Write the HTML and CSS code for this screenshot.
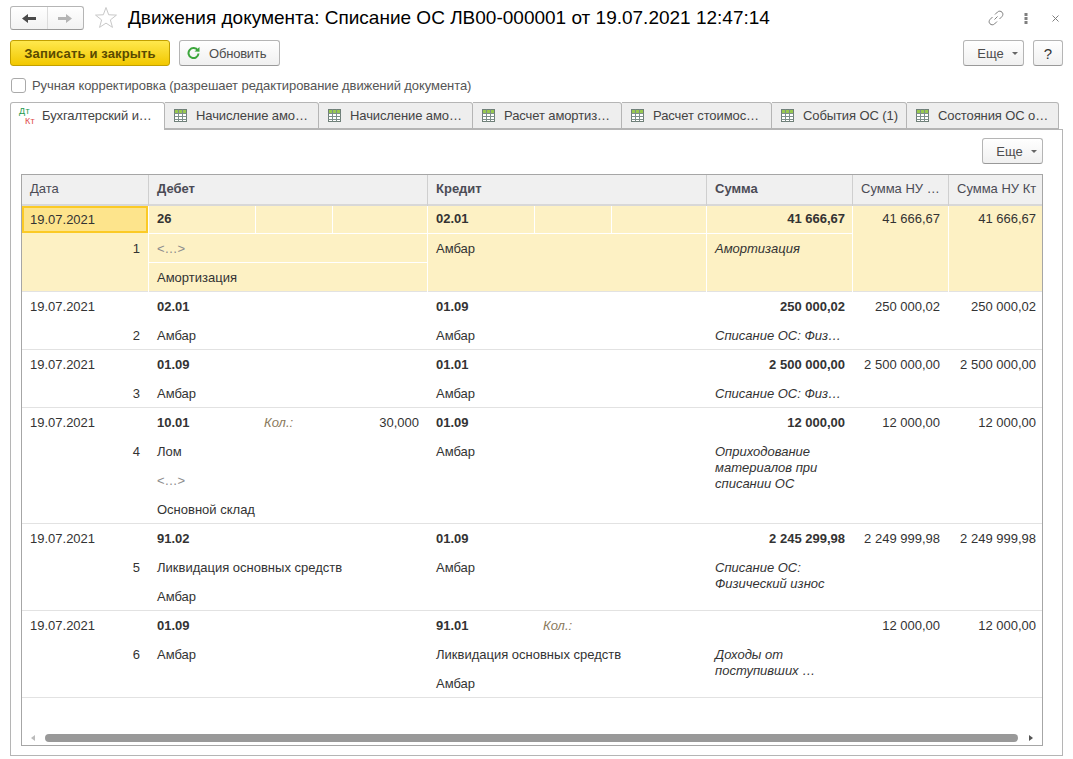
FILE: index.html
```html
<!DOCTYPE html>
<html lang="ru">
<head>
<meta charset="UTF-8">
<title>Движения документа</title>
<link rel="stylesheet" href="styles.css">
</head>
<body>
<svg width="0" height="0" class="defs">
  <symbol id="grid" viewBox="0 0 13 13">
    <rect x="0.5" y="0.5" width="12" height="12" fill="#fff" stroke="#6f7f78"/>
    <rect x="1" y="1" width="11" height="3" fill="#97c84f"/>
    <path d="M0.5 4.500H12.500M0.500 7.500H12.500M0.500 10.500H12.500M4.500 0.500V12.500M8.500 0.500V12.500" stroke="#7d8f8a" fill="none"/>
  </symbol>
</svg>

<div class="title-bar">
  <div class="nav-group">
    <button class="nav-btn nav-back">
      <svg width="14" height="9" viewBox="0 0 14 9"><path d="M0 4.500L6 0V3H14V6H6V9Z" fill="#4a4a4a"/></svg>
    </button>
    <button class="nav-btn">
      <svg width="14" height="9" viewBox="0 0 14 9"><path d="M14 4.500L8 0V3H0V6H8V9Z" fill="#b4b4b4"/></svg>
    </button>
  </div>
  <svg class="star" width="24" height="24" viewBox="0 0 24 24"><path d="M12 1.500L14.700 8.780L22.460 9.100L16.370 13.920L18.470 21.400L12 17.100L5.530 21.400L7.630 13.920L1.540 9.100L9.300 8.780Z" fill="#fff" stroke="#c8c8c8"/></svg>
  <h1 class="title">Движения документа: Списание ОС ЛВ00-000001 от 19.07.2021 12:47:14</h1>
  <div class="win-icons">
    <svg width="16" height="16" viewBox="0 0 16 16"><path d="M6.500 9.500L9.500 6.500M7 4.500L9.500 2C11 .7 12.800 1 14 2.200S15.200 5 14 6.500L11.500 9M9 11.500L6.500 14C5 15.200 3.200 15 2 13.800S.8 11 2 9.500L4.500 7" fill="none" stroke="#808080"/></svg>
    <svg class="dots" width="4" height="11" viewBox="0 0 4 11"><path d="M0.500 0H3.500V3H0.500ZM0.500 4H3.500V7H0.500ZM0.500 8H3.500V11H0.500Z" fill="#7f7f7f"/></svg>
    <svg width="7" height="7" viewBox="0 0 7 7"><path d="M0.500 0.500L6.500 6.500M6.500 0.500L0.500 6.500" stroke="#7f7f7f" fill="none"/></svg>
  </div>
</div>

<div class="command-bar">
  <button class="btn btn-primary">Записать и закрыть</button>
  <button class="btn btn-refresh">
    <svg width="13" height="13" viewBox="0 0 13 13"><path d="M10.800 3.500A5 5 0 1 0 11.500 6.500" fill="none" stroke="#3ca63c" stroke-width="2"/><path d="M7.500 4.500L12.500 4.800V0Z" fill="#3ca63c"/></svg>
    Обновить
  </button>
  <div class="spacer"></div>
  <button class="btn btn-more">Еще<span class="caret"></span></button>
  <button class="btn btn-help">?</button>
</div>

<label class="check-line"><span class="checkbox"></span>Ручная корректировка (разрешает редактирование движений документа)</label>

<div class="tabs">
  <div class="tab tab-active w1"><span class="dt-kt"><span class="dt">Дт</span><span class="kt">Кт</span></span><span class="tab-text">Бухгалтерский и…</span></div>
  <div class="tab w2"><svg class="tab-icon"><use href="#grid"/></svg><span class="tab-text">Начисление амо…</span></div>
  <div class="tab w3"><svg class="tab-icon"><use href="#grid"/></svg><span class="tab-text">Начисление амо…</span></div>
  <div class="tab w4"><svg class="tab-icon"><use href="#grid"/></svg><span class="tab-text">Расчет амортиз…</span></div>
  <div class="tab w5"><svg class="tab-icon"><use href="#grid"/></svg><span class="tab-text">Расчет стоимос…</span></div>
  <div class="tab w6"><svg class="tab-icon"><use href="#grid"/></svg><span class="tab-text">События ОС (1)</span></div>
  <div class="tab w7"><svg class="tab-icon"><use href="#grid"/></svg><span class="tab-text">Состояния ОС о…</span></div>
</div>

<div class="panel">
  <div class="panel-tools">
    <button class="btn btn-more">Еще<span class="caret"></span></button>
  </div>

  <div class="table">
    <div class="row head">
      <div class="hcell">Дата</div>
      <div class="hcell bold">Дебет</div>
      <div class="hcell bold">Кредит</div>
      <div class="hcell bold">Сумма</div>
      <div class="hcell">Сумма НУ …</div>
      <div class="hcell">Сумма НУ Кт</div>
    </div>

    <div class="rows">
      <div class="row selected">
        <div class="cell c-date">
          <div class="current">19.07.2021</div>
          <div class="line num">1</div>
        </div>
        <div class="cell">
          <div class="line sub sep"><b>26</b><i></i><i></i></div>
          <div class="line sep muted">&lt;…&gt;</div>
          <div class="line">Амортизация</div>
        </div>
        <div class="cell">
          <div class="line sub sep"><b>02.01</b><i></i><i></i></div>
          <div class="line">Амбар</div>
        </div>
        <div class="cell">
          <div class="line right sep"><b>41 666,67</b></div>
          <div class="note">Амортизация</div>
        </div>
        <div class="cell"><div class="line right">41 666,67</div></div>
        <div class="cell"><div class="line right">41 666,67</div></div>
      </div>

      <div class="row">
        <div class="cell c-date"><div class="line">19.07.2021</div><div class="line num">2</div></div>
        <div class="cell"><div class="line"><b>02.01</b></div><div class="line">Амбар</div></div>
        <div class="cell"><div class="line"><b>01.09</b></div><div class="line">Амбар</div></div>
        <div class="cell"><div class="line right"><b>250 000,02</b></div><div class="note">Списание ОС: Физ…</div></div>
        <div class="cell"><div class="line right">250 000,02</div></div>
        <div class="cell"><div class="line right">250 000,02</div></div>
      </div>

      <div class="row">
        <div class="cell c-date"><div class="line">19.07.2021</div><div class="line num">3</div></div>
        <div class="cell"><div class="line"><b>01.09</b></div><div class="line">Амбар</div></div>
        <div class="cell"><div class="line"><b>01.01</b></div><div class="line">Амбар</div></div>
        <div class="cell"><div class="line right"><b>2 500 000,00</b></div><div class="note">Списание ОС: Физ…</div></div>
        <div class="cell"><div class="line right">2 500 000,00</div></div>
        <div class="cell"><div class="line right">2 500 000,00</div></div>
      </div>

      <div class="row">
        <div class="cell c-date"><div class="line">19.07.2021</div><div class="line num">4</div></div>
        <div class="cell">
          <div class="line sub"><b>10.01</b><em>Кол.:</em><span>30,000</span></div>
          <div class="line">Лом</div>
          <div class="line muted">&lt;…&gt;</div>
          <div class="line">Основной склад</div>
        </div>
        <div class="cell"><div class="line"><b>01.09</b></div><div class="line">Амбар</div></div>
        <div class="cell"><div class="line right"><b>12 000,00</b></div><div class="note">Оприходование материалов при списании ОС</div></div>
        <div class="cell"><div class="line right">12 000,00</div></div>
        <div class="cell"><div class="line right">12 000,00</div></div>
      </div>

      <div class="row">
        <div class="cell c-date"><div class="line">19.07.2021</div><div class="line num">5</div></div>
        <div class="cell"><div class="line"><b>91.02</b></div><div class="line">Ликвидация основных средств</div><div class="line">Амбар</div></div>
        <div class="cell"><div class="line"><b>01.09</b></div><div class="line">Амбар</div></div>
        <div class="cell"><div class="line right"><b>2 245 299,98</b></div><div class="note">Списание ОС: Физический износ</div></div>
        <div class="cell"><div class="line right">2 249 999,98</div></div>
        <div class="cell"><div class="line right">2 249 999,98</div></div>
      </div>

      <div class="row">
        <div class="cell c-date"><div class="line">19.07.2021</div><div class="line num">6</div></div>
        <div class="cell"><div class="line"><b>01.09</b></div><div class="line">Амбар</div></div>
        <div class="cell">
          <div class="line sub"><b>91.01</b><em>Кол.:</em><span></span></div>
          <div class="line">Ликвидация основных средств</div>
          <div class="line">Амбар</div>
        </div>
        <div class="cell"><div class="line"></div><div class="note">Доходы от поступивших …</div></div>
        <div class="cell"><div class="line right">12 000,00</div></div>
        <div class="cell"><div class="line right">12 000,00</div></div>
      </div>
    </div>

    <div class="scrollbar">
      <span class="arrow arrow-left"></span>
      <div class="thumb"></div>
      <span class="arrow arrow-right"></span>
    </div>
  </div>
</div>
</body>
</html>
```

FILE: styles.css
```css
* {
  box-sizing: border-box;
}

html, body {
  margin: 0;
  height: 759px;
  overflow: hidden;
}

body {
  font-family: "Liberation Sans", Arial, sans-serif;
  font-size: 13px;
  color: #333;
  background-color: #fff;
  padding: 0 10px 3px 10px;
  display: flex;
  flex-direction: column;
}

.defs {
  position: absolute;
}

button {
  font-family: inherit;
  cursor: pointer;
}

/* title */
.title-bar {
  height: 36px;
  margin-bottom: 4px;
  display: flex;
  align-items: center;
}

.nav-group {
  width: 74px;
  height: 24px;
  display: flex;
  border: 1px solid #b5b5b5;
  border-bottom-color: #999;
  border-radius: 3px;
  background: linear-gradient(#fff, #f2f2f2);
}

.nav-btn {
  flex: 1;
  border: none;
  background: none;
  padding: 0;
  display: flex;
  align-items: center;
  justify-content: center;
}

.nav-back {
  border-right: 1px solid #dcdcdc;
}

.star {
  margin-left: 10px;
}

.title {
  margin: 0 0 0 10px;
  font-size: 19px;
  font-weight: normal;
  color: #000;
  white-space: nowrap;
}

.win-icons {
  margin-left: auto;
  padding-right: 4px;
  display: flex;
  align-items: center;
}

.dots {
  margin: 0 24px 0 20px;
}

/* buttons */
.command-bar {
  height: 26px;
  display: flex;
  gap: 9px;
}

.spacer {
  flex: 1;
}

.btn {
  height: 26px;
  border: 1px solid #b5b5b5;
  border-bottom-color: #999;
  border-radius: 3px;
  background: linear-gradient(#fff, #f0f0f0);
  font-size: 13px;
  color: #4d4d4d;
  padding: 0;
  display: flex;
  align-items: center;
  justify-content: center;
}

.btn-primary {
  width: 160px;
  font-weight: bold;
  letter-spacing: 0.15px;
  color: #5a4a00;
  background: linear-gradient(#ffe84d, #f2c800);
  border-color: #c2a000;
}

.btn-refresh {
  width: 101px;
  padding-left: 7px;
  gap: 9px;
  justify-content: flex-start;
  letter-spacing: -0.2px;
}

.btn-more {
  width: 61px;
  padding-left: 8px;
}

.btn-help {
  width: 30px;
  font-size: 15px;
  color: #333;
}

.caret {
  width: 0;
  height: 0;
  margin-left: 8px;
  border-left: 3px solid transparent;
  border-right: 3px solid transparent;
  border-top: 3px solid #666;
}

.check-line {
  height: 36px;
  display: flex;
  align-items: center;
  padding: 3px 0 0 1px;
  color: #555;
  letter-spacing: -0.08px;
  white-space: nowrap;
}

.checkbox {
  width: 15px;
  height: 15px;
  margin-right: 6px;
  border: 1px solid #aaa;
  border-radius: 3px;
  background-color: #fff;
}

/* tabs */
.tabs {
  display: flex;
  height: 28px;
  position: relative;
  z-index: 1;
}

.tab {
  height: 27px;
  display: flex;
  align-items: center;
  padding-left: 9px;
  border: 1px solid #b5b5b5;
  border-left: none;
  border-radius: 0 3px 0 0;
  background-color: #eee;
  color: #444;
  white-space: nowrap;
}

.tab-text {
  letter-spacing: -0.1px;
}

.tab-active {
  height: 28px;
  background-color: #fff;
  border-left: 1px solid #b5b5b5;
  border-bottom: none;
  border-radius: 3px 3px 0 0;
  padding: 0 0 2px 8px;
}

.w1 { width: 155px; }
.w2 { width: 154px; }
.w3 { width: 154px; }
.w4 { width: 149px; }
.w5 { width: 150px; }
.w6 { width: 135px; }
.w7 { width: 152px; }

.tab-icon {
  width: 13px;
  height: 13px;
  margin-right: 9px;
  flex: none;
}

.dt-kt {
  width: 17px;
  margin-right: 6px;
  font-size: 9px;
  line-height: 10px;
  letter-spacing: 0.3px;
  display: flex;
  flex-direction: column;
  flex: none;
}

.dt {
  color: #1c9a50;
}

.kt {
  color: #e04b4b;
  padding-left: 6px;
}

/* panel */
.panel {
  flex: 1;
  min-height: 0;
  margin-top: -1px;
  border: 1px solid #b5b5b5;
  padding: 8px 19px 9px 10px;
  display: flex;
  flex-direction: column;
}

.panel-tools {
  height: 36px;
  display: flex;
  justify-content: flex-end;
}

/* table */
.table {
  flex: 1;
  min-height: 0;
  border: 1px solid #a6a6a6;
  display: flex;
  flex-direction: column;
}

.row {
  display: grid;
  grid-template-columns: 127px 279px 279px 146px 96px 93px;
  box-shadow: inset 0 -1px #e2e2e2;
}

.head {
  height: 31px;
  box-shadow: inset 0 -2px #d8d8d8;
  background-color: #f0f0f0;
}

.hcell {
  display: flex;
  align-items: center;
  padding: 0 0 5px 8px;
  color: #4b4b55;
  border-right: 1px solid #cfcfcf;
  white-space: nowrap;
}

.hcell:nth-child(6) {
  border-right: none;
}

.hcell.bold {
  font-weight: bold;
}

.rows {
  flex: 1;
  min-height: 0;
}

.cell {
  min-width: 0;
}

.line {
  height: 29px;
  line-height: 30px;
  padding: 0 8px;
  white-space: nowrap;
}

.right {
  text-align: right;
}

.cell:nth-child(5) .right {
  padding-right: 9px;
}

.cell:nth-child(6) .right {
  padding-right: 6px;
}

.num {
  text-align: right;
  padding-right: 9px;
}

.muted {
  color: #8c8c8c;
}

.sub {
  display: grid;
  grid-template-columns: 106px 77px 1fr;
  padding: 0;
}

.sub b, .sub i, .sub span {
  padding: 0 8px;
  font-style: normal;
}

.sub em {
  padding-left: 9px;
  font-style: italic;
  color: #8a7a5c;
}

.sub span {
  padding-right: 9px;
  text-align: right;
}

.note {
  font-style: italic;
  padding: 0 8px;
  line-height: 16px;
  margin-top: 7px;
}

/* selected row */
.selected {
  background-color: #fdf1c4;
  height: 86px;
}

.selected .cell {
  border-right: 1px solid #fff;
}

.selected .cell:last-child {
  border-right: none;
}

.selected .num {
  padding-right: 8px;
}

.selected .cell:nth-child(4) .right {
  padding-right: 7px;
}

.selected .cell:nth-child(5) .right {
  padding-right: 8px;
}

.selected .cell .line:first-child {
  height: 28px;
  line-height: 26px;
}

.selected .sep {
  border-bottom: 1px solid #fff;
}

.selected .sub i {
  border-left: 1px solid #fff;
}

.current {
  height: 27px;
  margin-bottom: 1px;
  padding: 0 6px;
  line-height: 23px;
  background-color: #fde48c;
  border: 2px solid #fbca26;
}

/* scrollbar */
.scrollbar {
  height: 14px;
  display: flex;
  align-items: center;
  padding: 0 9px;
}

.thumb {
  flex: 1;
  height: 8px;
  margin: 0 11px 0 10px;
  border-radius: 4px;
  background-color: #999;
}

.arrow {
  width: 0;
  height: 0;
  border-top: 3px solid transparent;
  border-bottom: 3px solid transparent;
}

.arrow-left {
  border-right: 4px solid #bbb;
}

.arrow-right {
  border-left: 4px solid #555;
}
```
